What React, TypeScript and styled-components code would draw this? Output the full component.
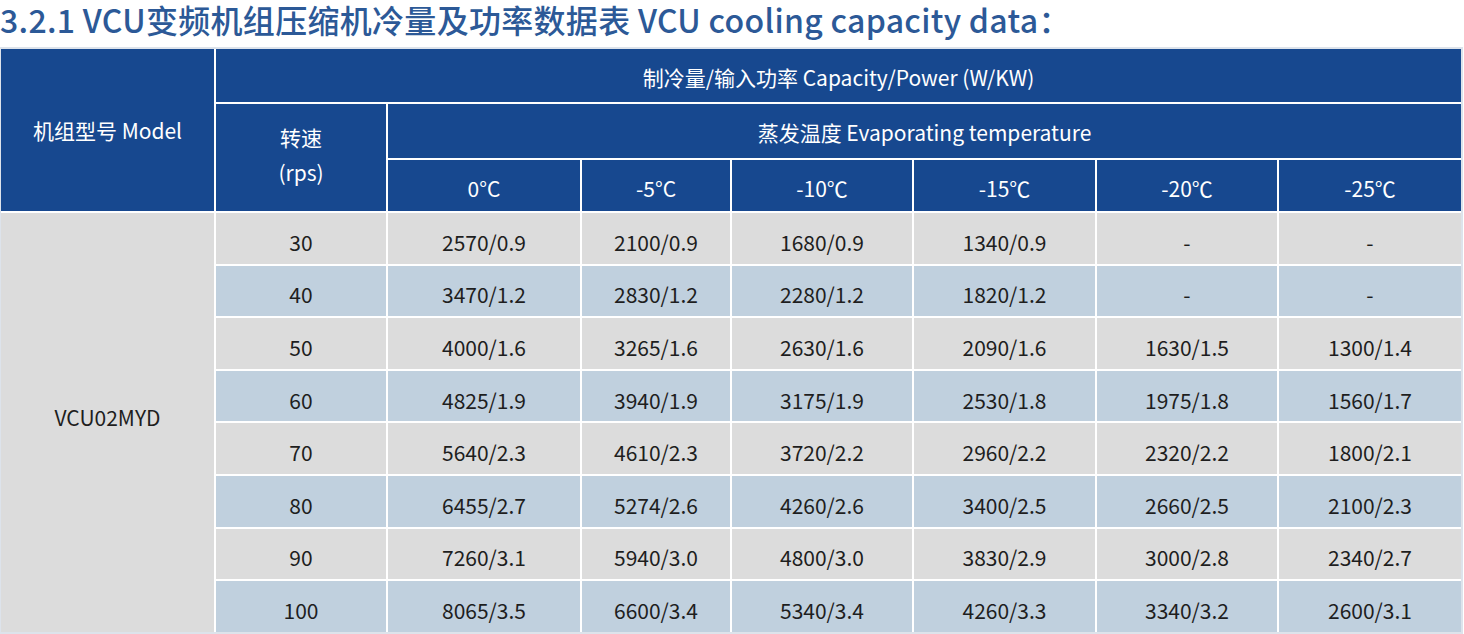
import React from "react";
import styled, { createGlobalStyle } from "styled-components";

const GlobalStyle = createGlobalStyle`
  html, body {
    margin: 0;
    padding: 0;
    background: #ffffff;
  }
  body {
    font-family: "Noto Sans CJK SC", "Noto Sans", sans-serif;
    overflow: hidden;
  }
`;

const Page = styled.div`
  width: 1464px;
  height: 634px;
  overflow: hidden;
  background: #ffffff;
`;

const Title = styled.h1`
  margin: 0;
  height: 47px;
  font-size: 32px;
  line-height: 38px;
  font-weight: 500;
  letter-spacing: 0.3px;
  color: #2c5997;
  white-space: nowrap;
  font-family: "Noto Sans CJK SC", "Noto Sans", sans-serif;
`;

const Frame = styled.div`
  width: 1463px;
  box-sizing: border-box;
  background: #dde3eb;
  padding: 2px 2px 2px 1px;
`;

const Grid = styled.div`
  display: grid;
  grid-template-columns: 213px 170px 192px 148px 180px 181px 180px 182px;
  grid-template-rows: 53px 54px 51px repeat(8, 50.6px);
  gap: 2px;
  background: #ffffff;
`;

type Tone = "head" | "gray" | "blue";

const toneBg: Record<Tone, string> = {
  head: "#17488f",
  gray: "#dcdcdc",
  blue: "#c0d0de",
};

const Cell = styled.div<{ $tone: Tone; $cols?: number; $rows?: number; $shift?: number }>`
  grid-column: span ${(p) => p.$cols ?? 1};
  grid-row: span ${(p) => p.$rows ?? 1};
  background: ${(p) => toneBg[p.$tone]};
  color: ${(p) => (p.$tone === "head" ? "#ffffff" : "#1e1e1e")};
  display: flex;
  flex-direction: column;
  align-items: center;
  justify-content: center;
  text-align: center;
  font-size: 21px;
  line-height: 35px;
  white-space: nowrap;
  overflow: hidden;
  padding-top: ${(p) => Math.max(0, (p.$shift ?? 0) * 2)}px;
  padding-bottom: ${(p) => Math.max(0, -(p.$shift ?? 0) * 2)}px;
`;

const temps = ["0°C", "-5°C", "-10℃", "-15℃", "-20℃", "-25℃"];

const rows: { rps: string; values: string[] }[] = [
  { rps: "30", values: ["2570/0.9", "2100/0.9", "1680/0.9", "1340/0.9", "-", "-"] },
  { rps: "40", values: ["3470/1.2", "2830/1.2", "2280/1.2", "1820/1.2", "-", "-"] },
  { rps: "50", values: ["4000/1.6", "3265/1.6", "2630/1.6", "2090/1.6", "1630/1.5", "1300/1.4"] },
  { rps: "60", values: ["4825/1.9", "3940/1.9", "3175/1.9", "2530/1.8", "1975/1.8", "1560/1.7"] },
  { rps: "70", values: ["5640/2.3", "4610/2.3", "3720/2.2", "2960/2.2", "2320/2.2", "1800/2.1"] },
  { rps: "80", values: ["6455/2.7", "5274/2.6", "4260/2.6", "3400/2.5", "2660/2.5", "2100/2.3"] },
  { rps: "90", values: ["7260/3.1", "5940/3.0", "4800/3.0", "3830/2.9", "3000/2.8", "2340/2.7"] },
  { rps: "100", values: ["8065/3.5", "6600/3.4", "5340/3.4", "4260/3.3", "3340/3.2", "2600/3.1"] },
];

export default function App() {
  return (
    <Page>
      <GlobalStyle />
      <Title>3.2.1 VCU变频机组压缩机冷量及功率数据表 VCU cooling capacity data：</Title>
      <Frame>
        <Grid>
          <Cell $tone="head" $rows={3}>机组型号 Model</Cell>
          <Cell $tone="head" $cols={7} $shift={2}>
            制冷量/输入功率 Capacity/Power (W/KW)
          </Cell>
          <Cell $tone="head" $rows={2} $shift={-3}>
            <span>转速</span>
            <span>(rps)</span>
          </Cell>
          <Cell $tone="head" $cols={6} $shift={1}>
            蒸发温度 Evaporating temperature
          </Cell>
          {temps.map((t) => (
            <Cell key={t} $tone="head" $shift={3}>
              {t}
            </Cell>
          ))}
          <Cell $tone="gray" $rows={8} $shift={-5}>
            VCU02MYD
          </Cell>
          {rows.map((r, i) => {
            const tone: Tone = i % 2 === 0 ? "gray" : "blue";
            return (
              <React.Fragment key={r.rps}>
                <Cell $tone={tone} $shift={4}>
                  {r.rps}
                </Cell>
                {r.values.map((v, j) => (
                  <Cell key={j} $tone={tone} $shift={4}>
                    {v}
                  </Cell>
                ))}
              </React.Fragment>
            );
          })}
        </Grid>
      </Frame>
    </Page>
  );
}
